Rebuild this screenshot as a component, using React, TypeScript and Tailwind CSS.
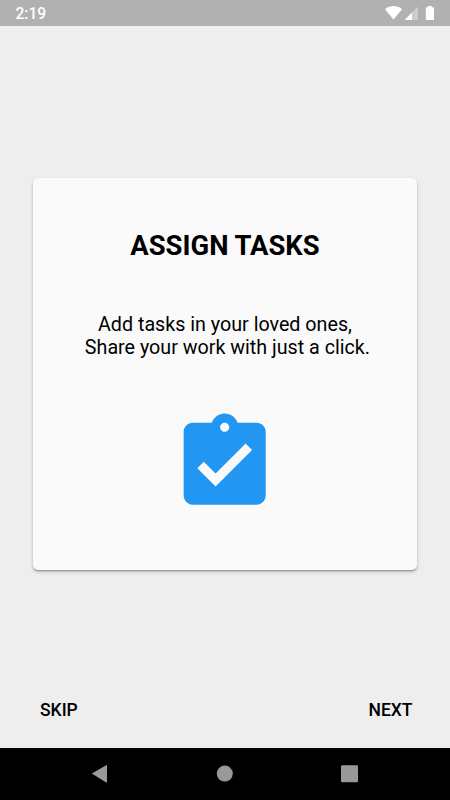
function StatusBar() {
  return (
    <header className="flex h-[26px] shrink-0 items-center justify-between bg-[#b1b1b1] pl-[15.5px] pr-[15px] text-white">
      <span className="pt-[3px] text-[15.6px] font-medium leading-none">2:19</span>
      <svg className="h-[26px] w-[50px]" viewBox="385 0 50 26" fill="currentColor">
        <path d="M385 9.2C389.8 4.9 397.2 4.9 402 9.2L393.5 19.6Z" />
        <path d="M418 6.5V20H404.5Z" opacity="0.35" />
        <path d="M412 12.5V20H404.5Z" />
        <path d="M427.8 6H431.8V7.2H433.2Q434 7.2 434 8V19.2Q434 20 433.2 20H426.6Q425.8 20 425.8 19.2V8Q425.8 7.2 426.6 7.2H427.8Z" />
      </svg>
    </header>
  );
}

function TaskIcon() {
  return (
    <svg className="h-[109.4px] w-[109.4px] text-[#2196f3]" viewBox="0 0 24 24" fill="currentColor">
      <path d="M19 3h-4.18C14.4 1.84 13.3 1 12 1c-1.3 0-2.4.84-2.82 2H5c-1.1 0-2 .9-2 2v14c0 1.1.9 2 2 2h14c1.1 0 2-.9 2-2V5c0-1.1-.9-2-2-2zm-7 0c.55 0 1 .45 1 1s-.45 1-1 1-1-.45-1-1 .45-1 1-1zm-2 14l-4-4 1.41-1.41L10 14.17l6.59-6.59L18 9l-8 8z" />
    </svg>
  );
}

function NavigationBar() {
  return (
    <nav className="h-[52px] shrink-0 bg-black">
      <svg className="h-[52px] w-full text-[#999999]" viewBox="0 748 450 52" fill="currentColor">
        <path d="M91.8 773.6 106.2 765.2Q107 764.8 107 765.7V782Q107 782.9 106.2 782.4Z" />
        <circle cx="224.8" cy="773.6" r="8" />
        <rect x="341" y="765.2" width="17" height="17" rx="1.2" />
      </svg>
    </nav>
  );
}

export default function App() {
  return (
    <div className="flex h-[800px] w-[450px] flex-col overflow-hidden bg-[#eeeeee] font-['Roboto',sans-serif] text-black">
      <StatusBar />
      <main className="flex flex-1 flex-col px-[33px] pt-[152px]">
        <section className="flex h-[392px] flex-col items-center rounded-[5px] bg-[#fafafa] shadow-[0_2px_2px_-1px_rgba(0,0,0,0.25),0_1px_2px_rgba(0,0,0,0.12),0_2px_4px_rgba(0,0,0,0.14)]">
          <h1 className="mt-[52px] text-[27.4px] font-bold leading-[32px]">ASSIGN TASKS</h1>
          <p className="mt-[51px] whitespace-pre text-center text-[19.7px] leading-[23px]">
            {"Add tasks in your loved ones,\n Share your work with just a click."}
          </p>
          <div className="mt-[50px]">
            <TaskIcon />
          </div>
        </section>
        <div className="mt-[130px] flex justify-between pl-[7px] pr-[4.5px] text-[17.5px] font-medium leading-5">
          <button>SKIP</button>
          <button>NEXT</button>
        </div>
      </main>
      <NavigationBar />
    </div>
  );
}
